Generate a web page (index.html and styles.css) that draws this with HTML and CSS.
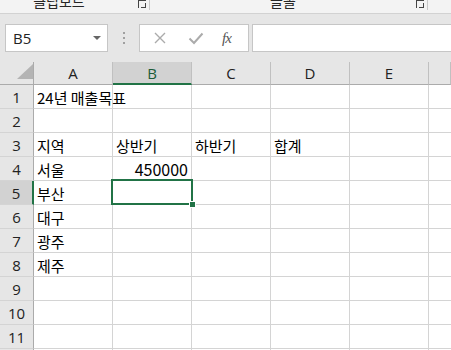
FILE: index.html
```html
<!DOCTYPE html>
<html>
<head>
    <title>Excel Sheet</title>
    <link rel="stylesheet" href="styles.css">
</head>
<body>
    <div class="ribbon">
        <div class="group group-clip">
            <span class="group-label">클립보드</span>
            <span class="launcher"></span>
        </div>
        <div class="group group-font">
            <span class="group-label">글꼴</span>
            <span class="launcher"></span>
        </div>
    </div>

    <div class="fbar">
        <div class="namebox">
            <span>B5</span>
            <span class="caret"></span>
        </div>
        <div class="grip"><i></i><i></i><i></i></div>
        <div class="fbuttons">
            <svg class="fb-icon" width="14" height="14" viewBox="0 0 14 14">
                <path d="M2 2 L12 12 M12 2 L2 12" stroke="#ababab" stroke-width="1.4" fill="none"/>
            </svg>
            <svg class="fb-icon" width="16" height="14" viewBox="0 0 16 14">
                <path d="M1.5 7.5 L6 12 L14.5 2.5" stroke="#ababab" stroke-width="2" fill="none"/>
            </svg>
            <span class="fx">fx</span>
        </div>
        <div class="finput"></div>
    </div>

    <div class="sheet">
        <div class="row head">
            <div class="rh corner"><span class="tri"></span></div>
            <div class="ch">A</div>
            <div class="ch sel">B</div>
            <div class="ch">C</div>
            <div class="ch">D</div>
            <div class="ch">E</div>
            <div class="ch rest"></div>
        </div>
        <div class="row">
            <div class="rh">1</div>
            <div class="c">24년 매출목표</div>
            <div class="c"></div><div class="c"></div><div class="c"></div><div class="c"></div><div class="c rest"></div>
        </div>
        <div class="row">
            <div class="rh">2</div>
            <div class="c"></div><div class="c"></div><div class="c"></div><div class="c"></div><div class="c"></div><div class="c rest"></div>
        </div>
        <div class="row">
            <div class="rh">3</div>
            <div class="c">지역</div>
            <div class="c">상반기</div>
            <div class="c">하반기</div>
            <div class="c">합계</div>
            <div class="c"></div><div class="c rest"></div>
        </div>
        <div class="row">
            <div class="rh">4</div>
            <div class="c">서울</div>
            <div class="c num">450000</div>
            <div class="c"></div><div class="c"></div><div class="c"></div><div class="c rest"></div>
        </div>
        <div class="row">
            <div class="rh sel">5</div>
            <div class="c">부산</div>
            <div class="c"></div><div class="c"></div><div class="c"></div><div class="c"></div><div class="c rest"></div>
        </div>
        <div class="row">
            <div class="rh">6</div>
            <div class="c">대구</div>
            <div class="c"></div><div class="c"></div><div class="c"></div><div class="c"></div><div class="c rest"></div>
        </div>
        <div class="row">
            <div class="rh">7</div>
            <div class="c">광주</div>
            <div class="c"></div><div class="c"></div><div class="c"></div><div class="c"></div><div class="c rest"></div>
        </div>
        <div class="row">
            <div class="rh">8</div>
            <div class="c">제주</div>
            <div class="c"></div><div class="c"></div><div class="c"></div><div class="c"></div><div class="c rest"></div>
        </div>
        <div class="row">
            <div class="rh">9</div>
            <div class="c"></div><div class="c"></div><div class="c"></div><div class="c"></div><div class="c"></div><div class="c rest"></div>
        </div>
        <div class="row">
            <div class="rh">10</div>
            <div class="c"></div><div class="c"></div><div class="c"></div><div class="c"></div><div class="c"></div><div class="c rest"></div>
        </div>
        <div class="row">
            <div class="rh">11</div>
            <div class="c"></div><div class="c"></div><div class="c"></div><div class="c"></div><div class="c"></div><div class="c rest"></div>
        </div>
        <div class="row">
            <div class="rh"></div>
            <div class="c"></div><div class="c"></div><div class="c"></div><div class="c"></div><div class="c"></div><div class="c rest"></div>
        </div>

        <div class="cursor"><span class="handle"></span></div>
    </div>
</body>
</html>
```

FILE: styles.css
```css
body {
    margin: 0;
    width: 451px;
    height: 350px;
    overflow: hidden;
    background-color: #e6e6e6;
    font-family: "Noto Sans CJK KR", "Noto Sans", sans-serif;
}
.ribbon {
    height: 13px;
    background-color: #f3f3f3;
    border-bottom: 1px solid #d2d2d2;
    display: flex;
    overflow: hidden;
}
.group {
    display: flex;
    border-right: 1px solid #c8c8c8;
    height: 10px;
    position: relative;
}
.group-clip {
    width: 149px;
}
.group-font {
    width: 277px;
}
.group-label {
    flex: 1;
    text-align: center;
    font-size: 14px;
    line-height: 13px;
    margin-top: -5px;
    color: #262626;
}
.group-clip .group-label {
    padding-right: 20px;
}
.launcher {
    width: 7px;
    height: 7px;
    border-left: 1px solid #444;
    border-top: 1px solid #444;
    margin: 0 3px 0 0;
    position: relative;
}
.launcher::after {
    content: "";
    position: absolute;
    left: 2px;
    top: 2px;
    width: 4px;
    height: 4px;
    border-right: 1px solid #444;
    border-bottom: 1px solid #444;
}
.fbar {
    display: flex;
    align-items: center;
    height: 28px;
    padding: 10px 0 10px 5px;
}
.namebox, .fbuttons, .finput {
    height: 26px;
    background-color: white;
    border: 1px solid #c6c6c6;
    box-sizing: content-box;
}
.namebox {
    width: 101px;
    display: flex;
    align-items: center;
    justify-content: space-between;
    font-size: 15px;
    color: #222;
}
.namebox span:first-child {
    padding-left: 7px;
    font-family: "Open Sans", sans-serif;
}
.caret {
    width: 0;
    height: 0;
    border-left: 4px solid transparent;
    border-right: 4px solid transparent;
    border-top: 4px solid #666;
    margin-right: 6px;
}
.grip {
    width: 31px;
    display: flex;
    flex-direction: column;
    align-items: center;
    gap: 3px;
}
.grip i {
    display: block;
    width: 2px;
    height: 2px;
    background-color: #a0a0a0;
}
.fbuttons {
    width: 108px;
    display: flex;
    align-items: center;
}
.fb-icon {
    margin-left: 13px;
}
.fb-icon + .fb-icon {
    margin-left: 21px;
}
.fx {
    margin-left: 18px;
    font-family: "Liberation Serif", serif;
    font-style: italic;
    font-size: 15px;
    color: #555;
    letter-spacing: -1px;
}
.finput {
    flex: 1;
    margin-left: 3px;
    border-right: none;
}
.sheet {
    position: relative;
    background-color: white;
}
.row {
    display: flex;
    height: 24px;
}
.row.head {
    height: 23px;
    background-color: #e6e6e6;
}
.rh {
    width: 33px;
    flex: none;
    background-color: #e6e6e6;
    border-right: 1px solid #ababab;
    border-bottom: 1px solid #d4d4d4;
    text-align: center;
    font-size: 15px;
    line-height: 24px;
    color: #222;
    font-family: "Open Sans", sans-serif;
}
.rh.sel {
    background-color: #d2d2d2;
    border-right: 2px solid #217346;
    width: 32px;
}
.corner {
    border-bottom: 1px solid #ababab;
    position: relative;
}
.tri {
    position: absolute;
    right: 0;
    bottom: 5px;
    width: 0;
    height: 0;
    border-left: 16px solid transparent;
    border-bottom: 15px solid #b4b4b4;
}
.ch {
    width: 78px;
    flex: none;
    border-bottom: 1px solid #ababab;
    border-right: 1px solid #c0c0c0;
    text-align: center;
    font-size: 15px;
    line-height: 22px;
    color: #222;
    font-family: "Open Sans", sans-serif;
    height: 22px;
}
.ch.sel {
    background-color: #d2d2d2;
    border-bottom: 2px solid #217346;
    height: 21px;
    color: #1d5c38;
}
.ch.rest {
    flex: 1;
}
.c {
    flex: none;
    height: 24px;
    border-right: 1px solid #d4d4d4;
    border-bottom: 1px solid #d4d4d4;
    font-size: 15px;
    line-height: 25px;
    padding: 0 3px;
    box-sizing: border-box;
    width: 79px;
    white-space: nowrap;
    color: #000;
}
.c.num {
    text-align: right;
    padding-right: 3px;
    font-size: 16px;
}
.c.rest {
    flex: 1;
    border-right: none;
}
.cursor {
    position: absolute;
    left: 111px;
    top: 117px;
    width: 78px;
    height: 22px;
    border: 2px solid #217346;
}
.handle {
    position: absolute;
    right: -5px;
    bottom: -5px;
    width: 5px;
    height: 5px;
    background-color: #217346;
    border: 1px solid white;
}
```
